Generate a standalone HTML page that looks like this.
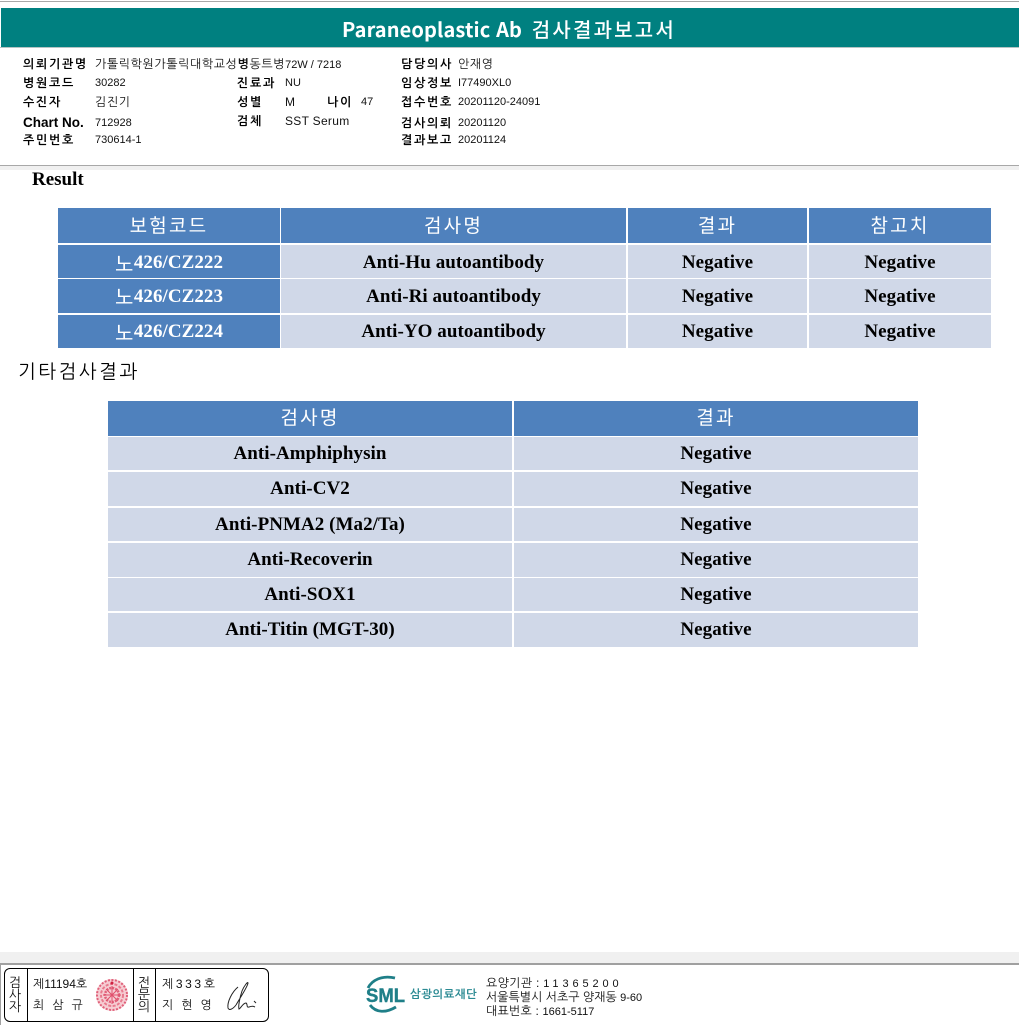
<!DOCTYPE html>
<html lang="ko"><head><meta charset="utf-8"><title>Paraneoplastic Ab 검사결과보고서</title>
<style>
html,body{margin:0;padding:0;background:#fff}
#p{position:relative;width:1019px;height:1032px;overflow:hidden;background:#fff;font-family:"Liberation Sans","NanumGothic","Noto Sans CJK KR",sans-serif;color:#000}
#p div{position:absolute}
.t{white-space:nowrap;font-size:11px;line-height:14px;color:#111}
.ko{font-size:12px;letter-spacing:.6px}
.b{font-weight:700;color:#000;font-size:12px;letter-spacing:1.7px}
.c{display:flex;align-items:center;justify-content:center;white-space:nowrap;font-family:"Liberation Serif","NanumGothic","Noto Sans CJK KR",serif;font-weight:700;font-size:19px;letter-spacing:.06px;color:#000;background:#d0d8e8;padding-bottom:1px;box-sizing:border-box}
.d{padding:1px 0 0}
.e{padding:3px 0 0}
.h{background:#4f81bd;color:#fff;font-family:"Liberation Sans","Noto Sans CJK KR",sans-serif;font-weight:400;font-size:19px;letter-spacing:2.2px;padding:0 0 3px}
.h2{padding:0 0 5px}
.k{background:#4f81bd;color:#fff}
.k span{font-family:"Noto Sans CJK KR",sans-serif;font-weight:400;font-size:20px;letter-spacing:.5px;position:relative;top:-1px}
</style></head><body><div id="p">
<div style="left:0;top:1px;width:1019px;height:1px;background:#a8a8a8"></div>
<div style="left:1px;top:8px;width:1018px;height:39px;background:#008080"></div>
<div style="left:0;top:47px;width:1019px;height:1px;background:#b5c4c4"></div>
<div class="t" style="left:342px;top:15px;font-family:'Noto Sans CJK KR',sans-serif;font-size:20px;line-height:28px;font-weight:700;color:#fff;letter-spacing:.12px">Paraneoplastic Ab <span style="font-size:20px;font-weight:500;letter-spacing:2.2px;margin-left:4px">검사결과보고서</span></div>

<div class="t b" style="left:23px;top:57px">의뢰기관명</div><div class="t" style="left:95px;top:57px"><span class="ko">가톨릭학원가톨릭대학교성<b>병</b>동트병</span>72W / 7218</div>
<div class="t b" style="left:23px;top:76px">병원코드</div><div class="t" style="left:95px;top:76px">30282</div>
<div class="t b" style="left:23px;top:95px">수진자</div><div class="t ko" style="left:95px;top:95px">김진기</div>
<div class="t b" style="left:23px;top:116px;font-size:13.5px;letter-spacing:0">Chart No.</div><div class="t" style="left:95px;top:116px">712928</div>
<div class="t b" style="left:23px;top:133px">주민번호</div><div class="t" style="left:95px;top:133px">730614-1</div>

<div class="t b" style="left:237px;top:76px">진료과</div><div class="t" style="left:285px;top:76px">NU</div>
<div class="t b" style="left:237px;top:95px">성별</div><div class="t" style="left:285px;top:95px;font-size:12px">M</div>
<div class="t b" style="left:327px;top:95px">나이</div><div class="t" style="left:361px;top:95px">47</div>
<div class="t b" style="left:237px;top:114px">검체</div><div class="t" style="left:285px;top:114px;font-size:12px;letter-spacing:.3px">SST Serum</div>

<div class="t b" style="left:401px;top:57px">담당의사</div><div class="t ko" style="left:458px;top:57px">안재영</div>
<div class="t b" style="left:401px;top:76px">임상정보</div><div class="t" style="left:458px;top:76px">I77490XL0</div>
<div class="t b" style="left:401px;top:95px">접수번호</div><div class="t" style="left:458px;top:95px">20201120-24091</div>
<div class="t b" style="left:401px;top:116px">검사의뢰</div><div class="t" style="left:458px;top:116px">20201120</div>
<div class="t b" style="left:401px;top:133px">결과보고</div><div class="t" style="left:458px;top:133px">20201124</div>

<div style="left:0;top:165px;width:1019px;height:1px;background:#a8a8a8"></div>
<div style="left:0;top:166px;width:1019px;height:4px;background:#f0f0f0"></div>
<div class="t" style="left:32px;top:170px;font-family:'Liberation Serif',serif;font-size:19px;font-weight:700;line-height:20px;color:#000">Result</div>

<div class="c h" style="left:58px;top:208px;width:222px;height:35px">보험코드</div>
<div class="c h" style="left:281px;top:208px;width:345px;height:35px">검사명</div>
<div class="c h" style="left:628px;top:208px;width:179px;height:35px">결과</div>
<div class="c h" style="left:809px;top:208px;width:182px;height:35px">참고치</div>

<div class="c k e" style="left:58px;top:245px;width:222px;height:33px"><span>노</span>426/CZ222</div>
<div class="c e" style="left:281px;top:245px;width:345px;height:33px">Anti-Hu autoantibody</div>
<div class="c e" style="left:628px;top:245px;width:179px;height:33px">Negative</div>
<div class="c e" style="left:809px;top:245px;width:182px;height:33px">Negative</div>

<div class="c k d" style="left:58px;top:279px;width:222px;height:34px"><span>노</span>426/CZ223</div>
<div class="c d" style="left:281px;top:279px;width:345px;height:34px">Anti-Ri autoantibody</div>
<div class="c d" style="left:628px;top:279px;width:179px;height:34px">Negative</div>
<div class="c d" style="left:809px;top:279px;width:182px;height:34px">Negative</div>

<div class="c k d" style="left:58px;top:315px;width:222px;height:33px"><span>노</span>426/CZ224</div>
<div class="c d" style="left:281px;top:315px;width:345px;height:33px">Anti-YO autoantibody</div>
<div class="c d" style="left:628px;top:315px;width:179px;height:33px">Negative</div>
<div class="c d" style="left:809px;top:315px;width:182px;height:33px">Negative</div>

<div class="t" style="left:18px;top:359px;font-family:'NanumGothic','Noto Sans CJK KR',sans-serif;font-size:19px;line-height:26px;color:#000;letter-spacing:2.4px">기타검사결과</div>

<div class="c h h2" style="left:108px;top:401px;width:404px;height:35px">검사명</div>
<div class="c h h2" style="left:514px;top:401px;width:404px;height:35px">결과</div>

<div class="c d" style="left:108px;top:437px;width:404px;height:33px">Anti-Amphiphysin</div>
<div class="c d" style="left:514px;top:437px;width:404px;height:33px">Negative</div>
<div class="c" style="left:108px;top:472px;width:404px;height:34px">Anti-CV2</div>
<div class="c" style="left:514px;top:472px;width:404px;height:34px">Negative</div>
<div class="c d" style="left:108px;top:508px;width:404px;height:33px">Anti-PNMA2 (Ma2/Ta)</div>
<div class="c d" style="left:514px;top:508px;width:404px;height:33px">Negative</div>
<div class="c" style="left:108px;top:543px;width:404px;height:34px">Anti-Recoverin</div>
<div class="c" style="left:514px;top:543px;width:404px;height:34px">Negative</div>
<div class="c d" style="left:108px;top:578px;width:404px;height:33px">Anti-SOX1</div>
<div class="c d" style="left:514px;top:578px;width:404px;height:33px">Negative</div>
<div class="c" style="left:108px;top:613px;width:404px;height:34px">Anti-Titin (MGT-30)</div>
<div class="c" style="left:514px;top:613px;width:404px;height:34px">Negative</div>

<div style="left:0;top:952px;width:1019px;height:11px;background:#f0f0f0"></div>
<div style="left:0;top:963px;width:1019px;height:2px;background:#a0a0a0"></div>
<div style="left:0;top:965px;width:1px;height:60px;background:#a0a0a0"></div>

<div style="left:4px;top:968px;width:263px;height:52px;border:1px solid #000;border-radius:6px"></div>
<div style="left:27px;top:968px;width:1px;height:53px;background:#000"></div>
<div style="left:133px;top:968px;width:1px;height:53px;background:#000"></div>
<div style="left:155px;top:968px;width:1px;height:53px;background:#000"></div>

<div class="t" style="left:8px;top:977px;width:14px;text-align:center;white-space:normal;line-height:12px;font-size:13px">검<br>사<br>자</div>
<div class="t" style="left:137px;top:977px;width:14px;text-align:center;white-space:normal;line-height:12px;font-size:13px">전<br>문<br>의</div>
<div class="t" style="left:33px;top:977px;font-size:12px">제11194호</div>
<div class="t" style="left:33px;top:998px;font-size:12px;letter-spacing:8px">최삼규</div>
<div class="t" style="left:162px;top:977px;font-size:12px;letter-spacing:2.6px">제333호</div>
<div class="t" style="left:162px;top:998px;font-size:12px;letter-spacing:8px">지현영</div>

<svg style="position:absolute;left:92px;top:976px" width="40" height="40" viewBox="0 0 40 40">
<circle cx="20" cy="19" r="16" fill="#f6cdd3"/>
<circle cx="20" cy="19" r="15" fill="none" stroke="#e0607a" stroke-width="2" stroke-dasharray="2 1.5"/>
<circle cx="20" cy="19" r="11" fill="none" stroke="#e87a8e" stroke-width="2" stroke-dasharray="3 1.5"/>
<circle cx="20" cy="19" r="7" fill="none" stroke="#e0607a" stroke-width="2.5" stroke-dasharray="2 1"/>
<path d="M11 19H29M20 10V28M14 13L26 25M26 13L14 25" stroke="#e0506c" stroke-width="1"/>
<circle cx="20" cy="7" r="1.5" fill="#d02040"/>
</svg>
<svg style="position:absolute;left:224px;top:980px" width="36" height="34" viewBox="0 0 36 34" fill="none" stroke="#222" stroke-width="1">
<path d="M14 7C8 12 3 22 4 28C5 31 9 29 12 25"/>
<path d="M12 25C16 18 24 6 24 3C24 1 20 6 18 11C16 17 14 26 15 29C17 28 19 23 22 23C24 24 22 28 25 27C28 26 29 26 31 27"/>
<path d="M30 21L32 23"/>
</svg>

<svg style="position:absolute;left:362px;top:972px" width="50" height="46" viewBox="0 0 50 46" fill="none">
<path d="M6 16C10 8 20 3 33 6" stroke="#1f7f88" stroke-width="2.8"/>
<path d="M8 33C14 41 24 41 34 35" stroke="#1f7f88" stroke-width="2.8"/>
<text x="4" y="30" font-family="Liberation Sans,sans-serif" font-weight="700" font-size="19" fill="#1f7f88" textLength="39" lengthAdjust="spacingAndGlyphs" stroke="#1f7f88" stroke-width=".4">SML</text>
</svg>
<div class="t" style="left:410px;top:988px;font-size:11.4px;font-weight:700;letter-spacing:.5px;color:#2b8a93">삼광의료재단</div>
<div class="t" style="left:486px;top:976px;font-size:12px;letter-spacing:.3px">요양기관 : <span style="font-size:11px;letter-spacing:3.9px">11365200</span></div>
<div class="t" style="left:486px;top:990px;font-size:12px">서울특별시 서초구 양재동 <span style="font-size:11px">9-60</span></div>
<div class="t" style="left:486px;top:1004px;font-size:12px;letter-spacing:.2px">대표번호 : <span style="font-size:11px;letter-spacing:0">1661-5117</span></div>
</div></body></html>
